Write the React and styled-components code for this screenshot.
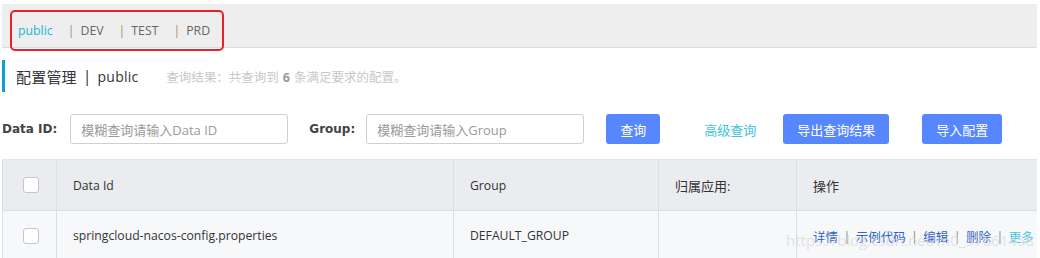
import React from 'react';
import styled, { createGlobalStyle } from 'styled-components';

const GlobalStyle = createGlobalStyle`
  body {
    margin: 0;
    background: #fff;
    font-family: "Open Sans", "Noto Sans CJK SC", sans-serif;
    color: #333;
  }
`;

const Page = styled.div`
  width: 1040px;
  height: 258px;
  overflow: hidden;
  padding: 4px 3px 0 2px;
  box-sizing: border-box;
`;

const TabBar = styled.div`
  height: 43px;
  background: #eeeeee;
  border-bottom: 1px solid #dcdcdc;
  display: flex;
  align-items: flex-start;
`;

const Highlight = styled.div`
  margin: 6px 0 0 8px;
  height: 37px;
  padding: 0 12px 0 6px;
  border: 2px solid #e8202a;
  border-radius: 5px;
  display: flex;
  align-items: center;
  gap: 15px;
  font-size: 12.3px;
  position: relative;
  z-index: 1;
`;

const Tab = styled.span`
  color: ${p => (p.$active ? '#21b7dc' : '#666')};
  display: flex;
  align-items: center;
  gap: 6px;
`;

const Sep = styled.span`
  color: #b98a58;
`;

const TitleRow = styled.div`
  display: flex;
  align-items: center;
  margin-top: 12px;
  height: 32px;
  border-left: 3px solid #0f9fcf;
  padding-left: 11px;
`;

const Title = styled.span`
  font-size: ${p => p.$size || 15}px;
  color: #333;
  letter-spacing: 0.2px;
`;

const TitleBar = styled.span`
  margin: 0 6px;
  color: #333;
`;

const Summary = styled.span`
  margin-left: 28px;
  font-size: 12.5px;
  color: #c8c8c8;
  b {
    color: #999;
    margin: 0 4px;
  }
`;

const SearchRow = styled.div`
  display: flex;
  align-items: center;
  margin-top: 22px;
  height: 30px;
`;

const Label = styled.span`
  font-family: "DejaVu Sans", sans-serif;
  font-weight: bold;
  font-size: 12px;
  color: #444;
  margin-right: ${p => p.$gap}px;
`;

const Input = styled.div`
  width: 218px;
  height: 30px;
  box-sizing: border-box;
  border: 1px solid #cfcfd6;
  border-radius: 3px;
  padding-left: 10px;
  display: flex;
  align-items: center;
  font-size: 13px;
  color: #9a9a9a;
  margin-right: ${p => p.$after}px;
`;

const Button = styled.div`
  height: 30px;
  width: ${p => p.$w}px;
  margin-left: ${p => p.$ml}px;
  box-sizing: border-box;
  background: #5787fe;
  border-radius: 3px;
  color: #fff;
  font-size: 13px;
  display: flex;
  align-items: center;
  justify-content: center;
`;

const LinkText = styled.span`
  margin-left: ${p => p.$ml}px;
  color: #3ec3e0;
  font-size: 13px;
`;

const Table = styled.div`
  margin-top: 15px;
  border-top: 1px solid #e4e5e8;
  display: grid;
  grid-template-columns: 54px 397px 205px 138px minmax(0, 1fr);
`;

const Cell = styled.div`
  height: ${p => (p.$head ? 51 : 50)}px;
  background: ${p => (p.$head ? '#ebecf0' : '#f7f8fa')};
  border-left: 1px solid #dcdee3;
  border-bottom: 1px solid #dcdee3;
  box-sizing: border-box;
  display: flex;
  align-items: center;
  justify-content: ${p => (p.$center ? 'center' : 'flex-start')};
  padding-left: ${p => (p.$center ? 0 : 16)}px;
  font-size: ${p => (p.$latin ? 12.2 : 13)}px;
  color: #333;
  position: relative;
  white-space: nowrap;
`;

const Check = styled.span`
  width: 16px;
  height: 16px;
  box-sizing: border-box;
  background: #fff;
  border: 1px solid #c4c6cf;
  border-radius: 3px;
  margin-left: 2px;
`;

const Actions = styled.div`
  display: flex;
  align-items: center;
  gap: 5.4px;
  font-size: 12.5px;
  margin-top: 2px;
  flex-shrink: 0;
  white-space: nowrap;
`;

const Action = styled.span`
  color: ${p => (p.$more ? '#3ec3e0' : '#2e62c9')};
`;

const ActionSep = styled.span`
  color: #888;
`;

const Watermark = styled.span`
  position: absolute;
  left: -11px;
  top: 19px;
  font-size: 15px;
  color: rgba(215, 215, 215, 0.7);
  white-space: nowrap;
  pointer-events: none;
`;

const envs = ['DEV', 'TEST', 'PRD'];
const actions = ['详情', '示例代码', '编辑', '删除'];

export default function App() {
  return (
    <Page>
      <GlobalStyle />
      <TabBar>
        <Highlight>
          <Tab $active>public</Tab>
          {envs.map(e => (
            <Tab key={e}>
              <Sep>|</Sep>
              {e}
            </Tab>
          ))}
        </Highlight>
      </TabBar>

      <TitleRow>
        <Title>配置管理</Title>
        <TitleBar>|</TitleBar>
        <Title $size={14}>public</Title>
        <Summary>
          查询结果：共查询到<b>6</b>条满足要求的配置。
        </Summary>
      </TitleRow>

      <SearchRow>
        <Label $gap={13}>Data ID:</Label>
        <Input $after={21}>模糊查询请输入Data ID</Input>
        <Label $gap={11}>Group:</Label>
        <Input $after={0}>模糊查询请输入Group</Input>
        <Button $w={54} $ml={22}>查询</Button>
        <LinkText $ml={44}>高级查询</LinkText>
        <Button $w={106} $ml={27}>导出查询结果</Button>
        <Button $w={80} $ml={33}>导入配置</Button>
      </SearchRow>

      <Table>
        <Cell $head $center><Check /></Cell>
        <Cell $head $latin>Data Id</Cell>
        <Cell $head $latin>Group</Cell>
        <Cell $head>归属应用:</Cell>
        <Cell $head>操作</Cell>

        <Cell $center><Check /></Cell>
        <Cell $latin>springcloud-nacos-config.properties</Cell>
        <Cell $latin>DEFAULT_GROUP</Cell>
        <Cell />
        <Cell>
          <Actions>
            {actions.map(a => (
              <React.Fragment key={a}>
                <Action>{a}</Action>
                <ActionSep>|</ActionSep>
              </React.Fragment>
            ))}
            <Action $more>更多</Action>
          </Actions>
          <Watermark>https://blog.csdn.net/m0_37661458</Watermark>
        </Cell>
      </Table>
    </Page>
  );
}
